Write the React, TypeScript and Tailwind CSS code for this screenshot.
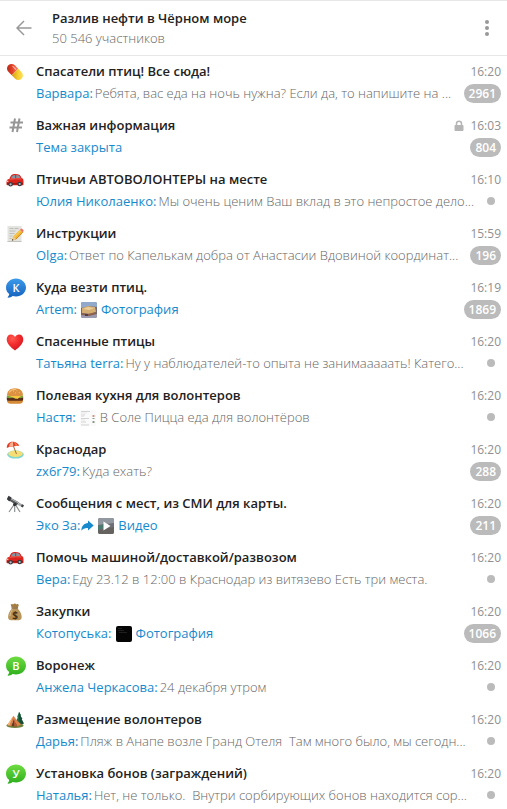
import type { ReactNode } from "react";

function Pill() {
  return (
    <svg viewBox="0 0 18 18" className="size-[18px]" aria-hidden="true">
      <defs>
        <linearGradient id="pillRed" x1="0" y1="1" x2="1" y2="0">
          <stop offset="0" stopColor="#a81f10" />
          <stop offset="0.6" stopColor="#e8452a" />
          <stop offset="1" stopColor="#f58a6c" />
        </linearGradient>
        <linearGradient id="pillYellow" x1="0" y1="1" x2="1" y2="0">
          <stop offset="0" stopColor="#d09a12" />
          <stop offset="0.5" stopColor="#f7cf2e" />
          <stop offset="1" stopColor="#fdeb7c" />
        </linearGradient>
      </defs>
      <g transform="rotate(45 9 9)">
        <path d="M9 4.400H4.200a4.600 4.600 0 0 0 0 9.200H9z" fill="url(#pillRed)" />
        <path d="M9 4.400h4.800a4.600 4.600 0 0 1 0 9.200H9z" fill="url(#pillYellow)" />
        <path d="M3.500 6.600h4" stroke="#fff" strokeOpacity="0.5" strokeWidth="1.2" strokeLinecap="round" />
      </g>
    </svg>
  );
}

function Car() {
  return (
    <svg viewBox="0 0 18 18" className="size-[18px]" aria-hidden="true">
      <path d="M.5 11.200c0-2 1-3 3-3.400C4.800 4 6 3 9.200 3c3.600 0 5.300 1 6.200 3.700 1.500.6 2.100 1.500 2.100 3.300v3.200c0 .7-.5 1-1.200 1H1.700c-.8 0-1.200-.4-1.200-1z" fill="#d9231c" />
      <path d="M4.900 7.500C5.800 5 6.700 4.200 9.200 4.100v3.400zM10.200 4.100c2.500 0 3.500.7 4.100 3h-4.100z" fill="#8496a2" />
      <path d="M3.500 8.300c4-.6 8-.7 12-.4" stroke="#f36a5c" strokeWidth=".8" fill="none" />
      <path d="M1 12.800h16" stroke="#8d120e" strokeWidth="1" />
      <circle cx="4.600" cy="13.300" r="2.300" fill="#343a40" />
      <circle cx="13.700" cy="13" r="2.300" fill="#343a40" />
      <circle cx="4.600" cy="13.300" r="1.100" fill="#b9c0c5" />
      <circle cx="13.700" cy="13" r="1.100" fill="#b9c0c5" />
      <circle cx="1.700" cy="10.300" r=".8" fill="#ffe0a0" />
    </svg>
  );
}

function Memo() {
  return (
    <svg viewBox="0 0 18 18" className="size-[18px]" aria-hidden="true">
      <path d="M1.500 1h14v16h-14z" fill="#e3e3df" />
      <path d="M1.500 16.500h14" stroke="#c4c4be" />
      <path d="M3.500 3.500h4m1 0h4M3.500 6h6M3.500 8.500h5M3.500 11h3M3.500 13.500h2" stroke="#b9b9b5" strokeWidth=".9" />
      <path d="M6 15.500l1.200-4 7.300-7.300 2.800 2.800-7.300 7.300z" fill="#f2b42c" />
      <path d="M8 12.500l7.400-7.400" stroke="#fbdc72" strokeWidth="1" />
      <path d="M9.500 14.500l7.300-7.200" stroke="#c77a15" strokeWidth=".8" />
      <path d="M14 4.700l1.200-1.200c.6-.5 3 1.800 2.500 2.500L16.500 7.300z" fill="#e87771" />
      <path d="M6 15.500l1.200-4 2.800 2.800z" fill="#edc99a" />
      <path d="M5.800 15.700l.6-1.800 1.200 1.200z" fill="#38322d" />
    </svg>
  );
}

function Heart() {
  return (
    <svg viewBox="0 0 18 18" className="size-[18px]" aria-hidden="true">
      <defs>
        <radialGradient id="heartRed" cx=".35" cy=".25" r=".8">
          <stop offset="0" stopColor="#ff5a50" />
          <stop offset=".5" stopColor="#f22c2c" />
          <stop offset="1" stopColor="#cf1624" />
        </radialGradient>
      </defs>
      <path d="M9 17.500C5 14.600 .7 11 .7 6.300 .7 3.400 2.600 1.400 5 1.400c1.800 0 3.200 1 4 2.600.8-1.600 2.200-2.600 4-2.600 2.400 0 4.300 2 4.300 4.900 0 4.700-4.300 8.300-8.300 11.200z" fill="url(#heartRed)" />
    </svg>
  );
}

function Burger() {
  return (
    <svg viewBox="0 0 18 18" className="size-[18px]" aria-hidden="true">
      <path d="M1 12.300h16v1.500c0 2-1.500 3-3.500 3h-9c-2 0-3.500-1-3.500-3z" fill="#d58a36" />
      <path d="M.8 10.300h16.400v2.200c0 .8-1 1.300-2 1.300H2.800c-1 0-2-.5-2-1.300z" fill="#5b2d18" />
      <path d="M.8 8.500h16.400l-.3 1.800-2.400.9-2.500-.8-2.500 1.700L7 10.400l-3 .8-3.100-.8z" fill="#78a83a" />
      <path d="M3 9h12l-3.500 3z" fill="#f8c63c" />
      <path d="M1 8.500C1 4 4 1.200 9 1.200s8 2.800 8 7.300c-3 .8-13 .8-16 0z" fill="#dc9240" />
      <path d="M3.500 5C5 2.800 7 2.300 9.500 2.300" stroke="#f4c078" strokeWidth="1.300" fill="none" strokeLinecap="round" />
      <path d="M7 4.200h.8M10.500 3.800h.8M12.800 5.600h.8M9 6h.8" stroke="#f8dca8" strokeWidth=".8" />
    </svg>
  );
}

function Beach() {
  return (
    <svg viewBox="0 0 18 18" className="size-[18px]" aria-hidden="true">
      <ellipse cx="9.500" cy="13.600" rx="8.300" ry="4" fill="#7fd6cf" />
      <ellipse cx="9.500" cy="12.800" rx="7.200" ry="3.200" fill="#f5de76" />
      <path d="M7 4l3.500 9" stroke="#a56d3c" strokeWidth="1" />
      <path d="M.8 7C.6 3 3.500.6 6.800.7c3 .1 5.700 1.500 6.500 4.300-2-.6-3.500-.4-5 .2C5.600 5.400 3 5.700.8 7z" fill="#e23c27" />
      <path d="M3.200 5.900C3 3.300 4.600 1.400 6.800.8 7 2 7.300 3.500 7.300 5.200c-1.500 0-2.900.2-4.100.7z" fill="#f9b28e" />
      <path d="M9.500 4.900C9.300 3 8.300 1.400 6.800.8c2 0 4.200 1.700 4.700 3.900z" fill="#f07a50" />
    </svg>
  );
}

function Telescope() {
  return (
    <svg viewBox="0 0 18 18" className="size-[18px]" aria-hidden="true">
      <path d="M8.500 9L3 17M8.700 9v8M9 9l5 8" stroke="#85898c" strokeWidth="1.100" fill="none" />
      <path d="M3.800 2.300l9 5-1.900 3.300-8.600-5.500z" fill="#55585b" />
      <path d="M4 3.300l8.300 4.600" stroke="#b6babd" strokeWidth="1" />
      <path d="M2.500.8l3.100 1.600-2.200 4L.8 4.300z" fill="#37393c" />
      <path d="M13 7.500l4.400 2.600-1.100 2-4.700-2.200z" fill="#a5a9ab" />
      <path d="M16 9.300l2 1-1.100 2.100-2-.9z" fill="#414346" />
      <circle cx="8.700" cy="9.400" r="1.600" fill="#303235" />
    </svg>
  );
}

function MoneyBag() {
  return (
    <svg viewBox="0 0 18 18" className="size-[18px]" aria-hidden="true">
      <path d="M6.300 5.200h5C14 7.700 15.700 11 15.700 14c0 2.200-1.500 3.200-3.200 3.200h-7.400c-1.700 0-3-1-3-3.200 0-3 1.500-6.300 4.200-8.800z" fill="#b8945a" />
      <path d="M5.600 4.500L4.700 1.600c.8-.8 1.800-.8 2.500-.1.800-1.200 2.400-1.200 3.100 0 .9-.7 1.900-.5 2.500.4l-1 2.900z" fill="#a57d42" />
      <path d="M5.500 5h6.600" stroke="#6e4c22" strokeWidth="1" />
      <path d="M4 13c0-2.500 1-4.700 2.800-6.700" stroke="#dcc08b" strokeWidth="1" fill="none" />
      <text x="9" y="15.500" textAnchor="middle" fontFamily="Open Sans, sans-serif" fontWeight="700" fontSize="10" fill="#453216">$</text>
    </svg>
  );
}

function Camping() {
  return (
    <svg viewBox="0 0 18 18" className="size-[18px]" aria-hidden="true">
      <path d="M13 .8l2 3.700-.8-.1 2.200 3.700-.9-.1 2.300 4.600-3.500 1.600H9.500l1.200-5.400 1.200-2.600-.8.1z" fill="#236b45" />
      <path d="M13 .8l2 3.700-.8-.1 2.200 3.700-.9-.1 2.300 4.600-4.300 1z" fill="#174c35" />
      <ellipse cx="9" cy="14.500" rx="8.600" ry="2.400" fill="#71803c" />
      <path d="M7.500 4.800L1.300 14l4.200 1.200L7.700 8l3.400 7.200 4-1.800C12 10.700 9.500 8 7.500 4.800z" fill="#db8148" />
      <path d="M7.500 4.800L1.300 14l2 .5z" fill="#f4b77c" />
      <path d="M7.700 8l-2.200 7.200h5.600z" fill="#653820" />
      <path d="M7.700 8l.6 7.200h2.800z" fill="#b85a35" />
    </svg>
  );
}

function Bubble({ letter, from, to, id }: { letter: string; from: string; to: string; id: string }) {
  return (
    <svg viewBox="0 0 20 20" className="size-5" aria-hidden="true">
      <defs>
        <linearGradient id={id} x1="0" y1="0" x2="0" y2="1">
          <stop offset="0" stopColor={from} />
          <stop offset="1" stopColor={to} />
        </linearGradient>
      </defs>
      <path d="M10 .5c5.500 0 10 4 10 9s-4.500 9-10 9c-1.200 0-2.300-.2-3.400-.5-1.200 1-2.700 1.700-4.600 1.700-.4 0-.5-.3-.2-.6.9-.8 1.300-1.900 1.400-3C1.200 14.400 0 12.100 0 9.500c0-5 4.500-9 10-9z" fill={`url(#${id})`} />
      <text x="10" y="13.500" textAnchor="middle" fontFamily="Open Sans, sans-serif" fontWeight="600" fontSize="11" fill="#fff">{letter}</text>
    </svg>
  );
}

function Hash() {
  return (
    <svg viewBox="0 0 18 18" className="size-[18px]" fill="none" stroke="#969696" strokeWidth="2" aria-hidden="true">
      <path d="M9 1.500L6.500 15M13.500 1.500L11 15M4.500 5.500h12.500M3.500 10.500h12.500" />
    </svg>
  );
}

function PhotoThumb() {
  return (
    <svg viewBox="0 0 16 16" className="size-4 rounded-xs" aria-hidden="true">
      <path d="M0 0h16v16H0z" fill="#716a76" />
      <path d="M0 0h16v5L9 4 0 6z" fill="#91a9cb" />
      <path d="M1 6l6-2 7 1 1 5-6 2-8-1z" fill="#d4ae72" />
      <path d="M2 7l5-2 6 1-5 2z" fill="#ecd09a" />
      <path d="M0 11l7 1 8-2v3l-6 1-9-1z" fill="#8c604b" />
      <path d="M0 13l8 1 8-2v4H0z" fill="#9b9ab0" />
      <path d="M4 12h3v2H4z" fill="#523e48" />
    </svg>
  );
}

function DocThumb() {
  return (
    <svg viewBox="0 0 16 16" className="size-4 rounded-xs" aria-hidden="true">
      <path d="M0 0h16v16H0z" fill="#fafafa" />
      <path d="M1 1.500h9M1 5h4M1 8.500h8M1 12h5M1 15h8" stroke="#d3d3d5" strokeWidth="1" />
      <path d="M1 3h6M1 6.500h3M1 10h4" stroke="#e7e7e9" strokeWidth="1" />
      <path d="M12.500 5h2v2h-2z" fill="#d49880" />
      <path d="M12.500 8h2v1h-2zM12.500 11h2v2h-2z" fill="#8a9a8a" />
    </svg>
  );
}

function VideoThumb() {
  return (
    <svg viewBox="0 0 16 16" className="size-4 rounded-xs" aria-hidden="true">
      <path d="M0 0h16v16H0z" fill="#6c7074" />
      <path d="M0 0h16v5L0 7z" fill="#9298a0" />
      <path d="M0 8l6-2v4l-6 2z" fill="#4b7b70" />
      <path d="M0 12l16-3v7H0z" fill="#66625f" />
      <path d="M5.500 3.500v9L12.500 8z" fill="#fff" />
    </svg>
  );
}

function DarkThumb() {
  return (
    <svg viewBox="0 0 16 16" className="size-4 rounded-xs" aria-hidden="true">
      <path d="M0 0h16v16H0z" fill="#050505" />
      <path d="M2 2.500h4M2 4.500h6M3 6.500h8" stroke="#303030" strokeWidth=".6" />
    </svg>
  );
}

function ForwardArrow() {
  return (
    <svg viewBox="0 0 13 12" className="ml-px h-3 w-[13px]" aria-hidden="true">
      <path d="M7 .5L12.700 5.500 7 10.500V8C4 7.800 2 8.500.4 10.800.5 6 3 3.200 7 3z" fill="#168acd" />
    </svg>
  );
}

function Lock() {
  return (
    <svg viewBox="0 0 10 12" className="h-3 w-2.5" role="img" aria-label="Закрыто">
      <path d="M2.500 6V3.800a2.500 2.500 0 0 1 5 0V6" fill="none" stroke="#b5b5b5" strokeWidth="1.500" />
      <rect x=".5" y="5" width="9" height="6" rx="1" fill="#b5b5b5" />
    </svg>
  );
}

type Topic = {
  icon: ReactNode;
  title: string;
  time: string;
  author?: string;
  forwarded?: boolean;
  thumb?: ReactNode;
  media?: string;
  text?: string;
  unread?: number;
  locked?: boolean;
};

const topics: Topic[] = [
  { icon: <Pill />, title: "Спасатели птиц! Все сюда!", time: "16:20", author: "Варвара:", text: "Ребята, вас еда на ночь нужна? Если да, то напишите на ...", unread: 2961 },
  { icon: <Hash />, title: "Важная информация", time: "16:03", media: "Тема закрыта", unread: 804, locked: true },
  { icon: <Car />, title: "Птичьи АВТОВОЛОНТЕРЫ на месте", time: "16:10", author: "Юлия Николаенко:", text: "Мы очень ценим Ваш вклад в это непростое дело..." },
  { icon: <Memo />, title: "Инструкции", time: "15:59", author: "Olga:", text: "Ответ по Капелькам добра от Анастасии Вдовиной координат...", unread: 196 },
  { icon: <Bubble id="bubbleBlue" letter="К" from="#3d9bea" to="#1462bd" />, title: "Куда везти птиц.", time: "16:19", author: "Artem:", thumb: <PhotoThumb />, media: "Фотография", unread: 1869 },
  { icon: <Heart />, title: "Спасенные птицы", time: "16:20", author: "Татьяна terra:", text: "Ну у наблюдателей-то опыта не занимааааать! Катего..." },
  { icon: <Burger />, title: "Полевая кухня для волонтеров", time: "16:20", author: "Настя:", thumb: <DocThumb />, text: "В Соле Пицца еда для волонтёров" },
  { icon: <Beach />, title: "Краснодар", time: "16:20", author: "zx6r79:", text: "Куда ехать?", unread: 288 },
  { icon: <Telescope />, title: "Сообщения с мест, из СМИ для карты.", time: "16:20", author: "Эко За:", forwarded: true, thumb: <VideoThumb />, media: "Видео", unread: 211 },
  { icon: <Car />, title: "Помочь машиной/доставкой/развозом", time: "16:20", author: "Вера:", text: "Еду 23.12 в 12:00 в Краснодар из витязево Есть три места." },
  { icon: <MoneyBag />, title: "Закупки", time: "16:20", author: "Котопуська:", thumb: <DarkThumb />, media: "Фотография", unread: 1066 },
  { icon: <Bubble id="bubbleGreenV" letter="В" from="#6fdc42" to="#2cae1c" />, title: "Воронеж", time: "16:20", author: "Анжела Черкасова:", text: "24 декабря утром" },
  { icon: <Camping />, title: "Размещение волонтеров", time: "16:20", author: "Дарья:", text: "Пляж в Анапе возле Гранд Отеля  Там много было, мы сегодн..." },
  { icon: <Bubble id="bubbleGreenU" letter="У" from="#6fdc42" to="#2cae1c" />, title: "Установка бонов (заграждений)", time: "16:20", author: "Наталья:", text: "Нет, не только.  Внутри сорбирующих бонов находится сор..." },
];

function TopicRow({ topic }: { topic: Topic }) {
  return (
    <li>
      <button type="button" className="flex h-[54px] w-full items-start px-1.5 py-[5px] text-left">
        <span className="flex h-[22px] w-[30px] shrink-0 items-center">{topic.icon}</span>
        <span className="min-w-0 flex-1">
          <span className="flex h-[22px] items-center">
            <span className="min-w-0 flex-1 truncate font-semibold text-[#222222]">{topic.title}</span>
            {topic.locked && <span className="mr-1.5"><Lock /></span>}
            <span className="text-xs text-[#909090]">{topic.time}</span>
          </span>
          <span className="flex h-[22px] items-center gap-1">
            <span className="flex min-w-0 flex-1 items-center gap-0.5 whitespace-pre">
              {topic.author && (
                <span className="flex shrink-0 items-center text-[#168acd]">
                  {topic.author}
                  {topic.forwarded && <ForwardArrow />}
                </span>
              )}
              {topic.thumb && <span className="mx-0.5 shrink-0">{topic.thumb}</span>}
              {topic.media && <span className="text-[#168acd]">{topic.media}</span>}
              {topic.text && <span className="min-w-0 truncate whitespace-pre font-light text-[#666666]">{topic.text}</span>}
            </span>
            {topic.unread ? (
              <span className="mb-px h-[19px] shrink-0 rounded-full bg-[#bbbbbb] px-[5px] text-xs leading-[19px] font-semibold text-white">{topic.unread}</span>
            ) : (
              <span className="mr-1.5 mb-0.5 size-2 shrink-0 rounded-full bg-[#bbbbbb]" />
            )}
          </span>
        </span>
      </button>
    </li>
  );
}

export default function App() {
  return (
    <div className="flex h-screen flex-col overflow-hidden bg-white font-['Open_Sans','Noto_Sans',sans-serif] text-[13px]">
      <header className="flex h-14 shrink-0 items-center border-y border-[#e7e7e7] pr-[15px] pl-4">
        <button type="button" aria-label="Назад" className="w-9 shrink-0">
          <svg viewBox="0 0 16 16" className="size-4" fill="none" stroke="#999999" strokeWidth="1.500" aria-hidden="true">
            <path d="M15.500 8H1.500M8 1L1 8l7 7" />
          </svg>
        </button>
        <div className="min-w-0 flex-1 leading-5">
          <h1 className="truncate font-semibold text-[#222222]">Разлив нефти в Чёрном море</h1>
          <p className="truncate font-light text-[#666666]">50 546 участников</p>
        </div>
        <button type="button" aria-label="Меню" className="flex flex-col items-center gap-0.5 px-[3px]">
          <span className="size-1 rounded-full bg-[#999999]" />
          <span className="size-1 rounded-full bg-[#999999]" />
          <span className="size-1 rounded-full bg-[#999999]" />
        </button>
      </header>
      <main className="min-h-0 flex-1 overflow-hidden">
        <ul>
          {topics.map((topic) => (
            <TopicRow key={topic.title} topic={topic} />
          ))}
        </ul>
      </main>
    </div>
  );
}
